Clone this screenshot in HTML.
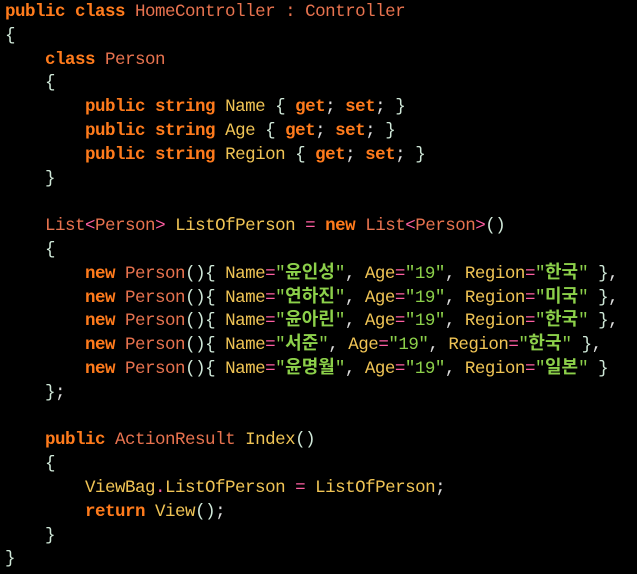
<!DOCTYPE html>
<html><head><meta charset="utf-8"><style>
html,body{margin:0;padding:0;background:#000;width:637px;height:574px;overflow:hidden}
pre{margin:0;padding:1px 0 0 5px;font-family:"Liberation Mono",monospace;font-size:17.5px;letter-spacing:-0.5px;line-height:23.8px;color:#dcdcdc;white-space:pre}
.k{color:#ff7b1c;font-weight:bold}
.t{color:#e8734f}
.i{color:#f0c455}
.b{color:#cfe8d8}
.p{color:#ff5fa2}
.s{color:#8cd04a}
.ko{font-family:"Noto Sans CJK KR",sans-serif;font-size:18px;letter-spacing:0;font-weight:bold;line-height:0}
</style></head><body><pre><span class="k">public class</span> <span class="t">HomeController</span> <span class="t">:</span> <span class="t">Controller</span>
<span class="b">{</span>
    <span class="k">class</span> <span class="t">Person</span>
    <span class="b">{</span>
        <span class="k">public string</span> <span class="i">Name</span> <span class="b">{</span> <span class="k">get</span>; <span class="k">set</span>; <span class="b">}</span>
        <span class="k">public string</span> <span class="i">Age</span> <span class="b">{</span> <span class="k">get</span>; <span class="k">set</span>; <span class="b">}</span>
        <span class="k">public string</span> <span class="i">Region</span> <span class="b">{</span> <span class="k">get</span>; <span class="k">set</span>; <span class="b">}</span>
    <span class="b">}</span>

    <span class="t">List</span><span class="p">&lt;</span><span class="t">Person</span><span class="p">&gt;</span> <span class="i">ListOfPerson</span> <span class="p">=</span> <span class="k">new</span> <span class="t">List</span><span class="p">&lt;</span><span class="t">Person</span><span class="p">&gt;</span><span class="b">()</span>
    <span class="b">{</span>
        <span class="k">new</span> <span class="t">Person</span><span class="b">(){</span> <span class="i">Name</span><span class="p">=</span><span class="s">"<span class="ko">윤인성</span>"</span>, <span class="i">Age</span><span class="p">=</span><span class="s">"19"</span>, <span class="i">Region</span><span class="p">=</span><span class="s">"<span class="ko">한국</span>"</span> <span class="b">}</span>,
        <span class="k">new</span> <span class="t">Person</span><span class="b">(){</span> <span class="i">Name</span><span class="p">=</span><span class="s">"<span class="ko">연하진</span>"</span>, <span class="i">Age</span><span class="p">=</span><span class="s">"19"</span>, <span class="i">Region</span><span class="p">=</span><span class="s">"<span class="ko">미국</span>"</span> <span class="b">}</span>,
        <span class="k">new</span> <span class="t">Person</span><span class="b">(){</span> <span class="i">Name</span><span class="p">=</span><span class="s">"<span class="ko">윤아린</span>"</span>, <span class="i">Age</span><span class="p">=</span><span class="s">"19"</span>, <span class="i">Region</span><span class="p">=</span><span class="s">"<span class="ko">한국</span>"</span> <span class="b">}</span>,
        <span class="k">new</span> <span class="t">Person</span><span class="b">(){</span> <span class="i">Name</span><span class="p">=</span><span class="s">"<span class="ko">서준</span>"</span>, <span class="i">Age</span><span class="p">=</span><span class="s">"19"</span>, <span class="i">Region</span><span class="p">=</span><span class="s">"<span class="ko">한국</span>"</span> <span class="b">}</span>,
        <span class="k">new</span> <span class="t">Person</span><span class="b">(){</span> <span class="i">Name</span><span class="p">=</span><span class="s">"<span class="ko">윤명월</span>"</span>, <span class="i">Age</span><span class="p">=</span><span class="s">"19"</span>, <span class="i">Region</span><span class="p">=</span><span class="s">"<span class="ko">일본</span>"</span> <span class="b">}</span>
    <span class="b">}</span>;

    <span class="k">public</span> <span class="t">ActionResult</span> <span class="i">Index</span><span class="b">()</span>
    <span class="b">{</span>
        <span class="i">ViewBag</span><span class="p">.</span><span class="i">ListOfPerson</span> <span class="p">=</span> <span class="i">ListOfPerson</span>;
        <span class="k">return</span> <span class="i">View</span><span class="b">()</span>;
    <span class="b">}</span>
<span class="b">}</span></pre></body></html>
